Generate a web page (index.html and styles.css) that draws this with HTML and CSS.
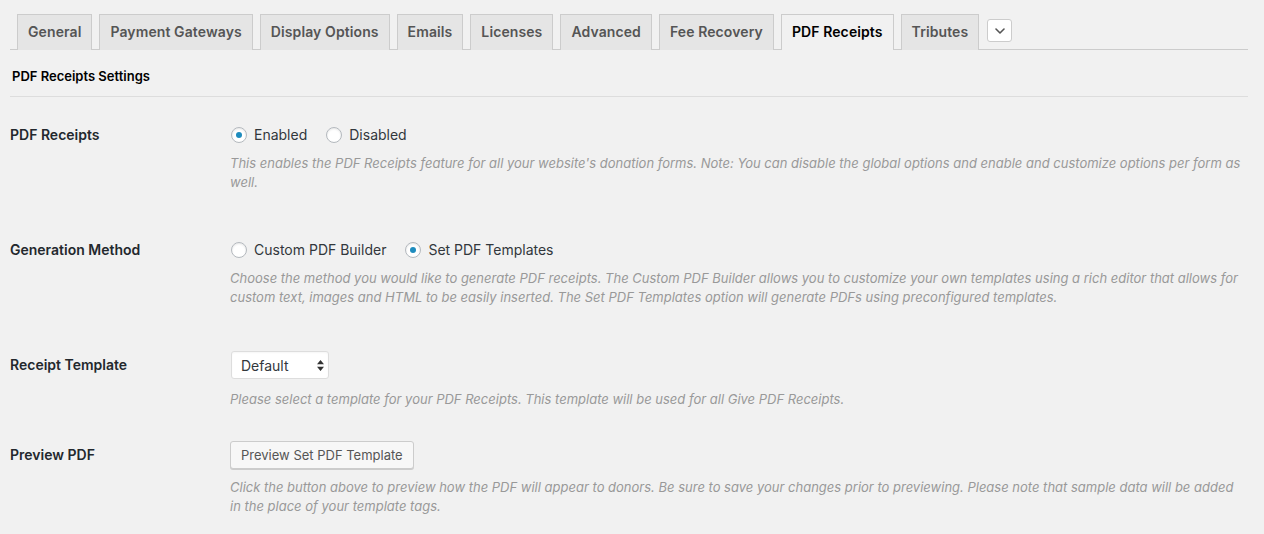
FILE: index.html
```html
<!DOCTYPE html>
<html lang="en">
<head>
<meta charset="utf-8">
<title>PDF Receipts Settings</title>
<link rel="stylesheet" href="styles.css">
</head>
<body>
<div class="wrap">
  <nav class="tabs">
    <a class="tab">General</a>
    <a class="tab">Payment Gateways</a>
    <a class="tab">Display Options</a>
    <a class="tab">Emails</a>
    <a class="tab">Licenses</a>
    <a class="tab">Advanced</a>
    <a class="tab">Fee Recovery</a>
    <a class="tab tab-active">PDF Receipts</a>
    <a class="tab">Tributes</a>
    <button class="more" type="button" aria-label="More">
      <svg width="10" height="6" viewBox="0 0 10 6"><path d="M1 1l4 4 4-4" fill="none" stroke="#555" stroke-width="1.6" stroke-linecap="round" stroke-linejoin="round"/></svg>
    </button>
  </nav>

  <h2 class="section-title">PDF Receipts Settings</h2>

  <div class="form">
    <div class="row row-radio">
      <div class="label">PDF Receipts</div>
      <div class="field">
        <div class="control">
          <label class="choice"><span class="radio radio-on"></span>Enabled</label>
          <label class="choice"><span class="radio"></span>Disabled</label>
        </div>
        <p class="desc">This enables the PDF Receipts feature for all your website's donation forms. Note: You can disable the global options and enable and customize options per form as well.</p>
      </div>
    </div>

    <div class="row row-radio">
      <div class="label">Generation Method</div>
      <div class="field">
        <div class="control">
          <label class="choice"><span class="radio"></span>Custom PDF Builder</label>
          <label class="choice"><span class="radio radio-on"></span>Set PDF Templates</label>
        </div>
        <p class="desc">Choose the method you would like to generate PDF receipts. The Custom PDF Builder allows you to customize your own templates using a rich editor that allows for custom text, images and HTML to be easily inserted. The Set PDF Templates option will generate PDFs using preconfigured templates.</p>
      </div>
    </div>

    <div class="row row-select">
      <div class="label">Receipt Template</div>
      <div class="field">
        <div class="control">
          <div class="select">
            <span>Default</span>
            <svg width="7" height="11" viewBox="0 0 7 11"><path d="M3.5 0L7 4.2H0z M3.5 11L0 6.8h7z" fill="#333"/></svg>
          </div>
        </div>
        <p class="desc">Please select a template for your PDF Receipts. This template will be used for all Give PDF Receipts.</p>
      </div>
    </div>

    <div class="row row-button">
      <div class="label">Preview PDF</div>
      <div class="field">
        <div class="control">
          <button class="btn" type="button">Preview Set PDF Template</button>
        </div>
        <p class="desc">Click the button above to preview how the PDF will appear to donors. Be sure to save your changes prior to previewing. Please note that sample data will be added in the place of your template tags.</p>
      </div>
    </div>
  </div>
</div>
</body>
</html>
```
FILE: styles.css
```css
* { box-sizing: border-box; }
html, body { margin: 0; padding: 0; }
body {
  background: #f1f1f1;
  font-family: Inter, "Liberation Sans", sans-serif;
  color: #32373c;
  font-size: 13px;
}
.wrap { margin: 0 16px 0 10px; }

.tabs {
  display: flex;
  align-items: flex-end;
  padding-top: 14px;
  border-bottom: 1px solid #ccc;
}
.tab {
  display: block;
  margin-left: 7px;
  padding: 5px 10px 6px;
  border: 1px solid #ccc;
  border-bottom: none;
  background: #e5e5e5;
  color: #555;
  font-size: 14px;
  font-weight: 600;
  letter-spacing: 0.1px;
  line-height: 24px;
  margin-bottom: -1px;
}
.tab-active {
  background: #f1f1f1;
  color: #000;
}
.more {
  align-self: flex-start;
  margin: 5px 0 0 8px;
  width: 25px;
  height: 23px;
  padding: 0;
  background: #fff;
  border: 1px solid #ccc;
  border-radius: 3px;
  display: flex;
  align-items: center;
  justify-content: center;
}

.section-title {
  margin: 0;
  padding: 16px 0 10px 2px;
  font-size: 13px;
  line-height: 20px;
  font-weight: 600;
  color: #000;
  border-bottom: 1px solid #ddd;
}

.form { padding-top: 24px; }
.row { display: flex; }
.label {
  width: 220px;
  flex: none;
  font-size: 14px;
  font-weight: 600;
  line-height: 28px;
  color: #23282d;
}
.field { flex: 1; padding-right: 4px; }
.control {
  height: 28px;
  display: flex;
  align-items: center;
}
.choice {
  display: flex;
  align-items: center;
  font-size: 14px;
  color: #32373c;
  margin-right: 18px;
  line-height: 20px;
}
.radio {
  width: 16px;
  height: 16px;
  border-radius: 50%;
  border: 1px solid #b4b9be;
  background: #fff;
  box-shadow: inset 0 1px 2px rgba(0,0,0,.1);
  margin: 0 7px 0 1px;
  display: flex;
  align-items: center;
  justify-content: center;
}
.radio-on::after {
  content: "";
  width: 6px;
  height: 6px;
  border-radius: 50%;
  background: #1e8cbe;
}
.desc {
  margin: 0;
  font-size: 13px;
  line-height: 19px;
  font-style: italic;
  color: #999;
}
.row-radio .desc { margin-top: 5px; margin-bottom: 44px; }
.row-select .desc { margin-top: 11px; margin-bottom: 32px; }
.row-button .desc { margin-top: 9px; }

.select {
  width: 98px;
  height: 28px;
  margin-left: 1px;
  background: #fff;
  border: 1px solid #ddd;
  border-radius: 3px;
  box-shadow: inset 0 1px 2px rgba(0,0,0,.04);
  display: flex;
  align-items: center;
  justify-content: space-between;
  padding: 0 4px 0 9px;
  font-size: 14px;
  color: #32373c;
}
.btn {
  height: 28px;
  padding: 0 10px;
  background: #f7f7f7;
  border: 1px solid #ccc;
  border-radius: 3px;
  box-shadow: 0 1px 0 #ccc;
  color: #555;
  font-family: inherit;
  font-size: 13px;
  line-height: 26px;
}
```
